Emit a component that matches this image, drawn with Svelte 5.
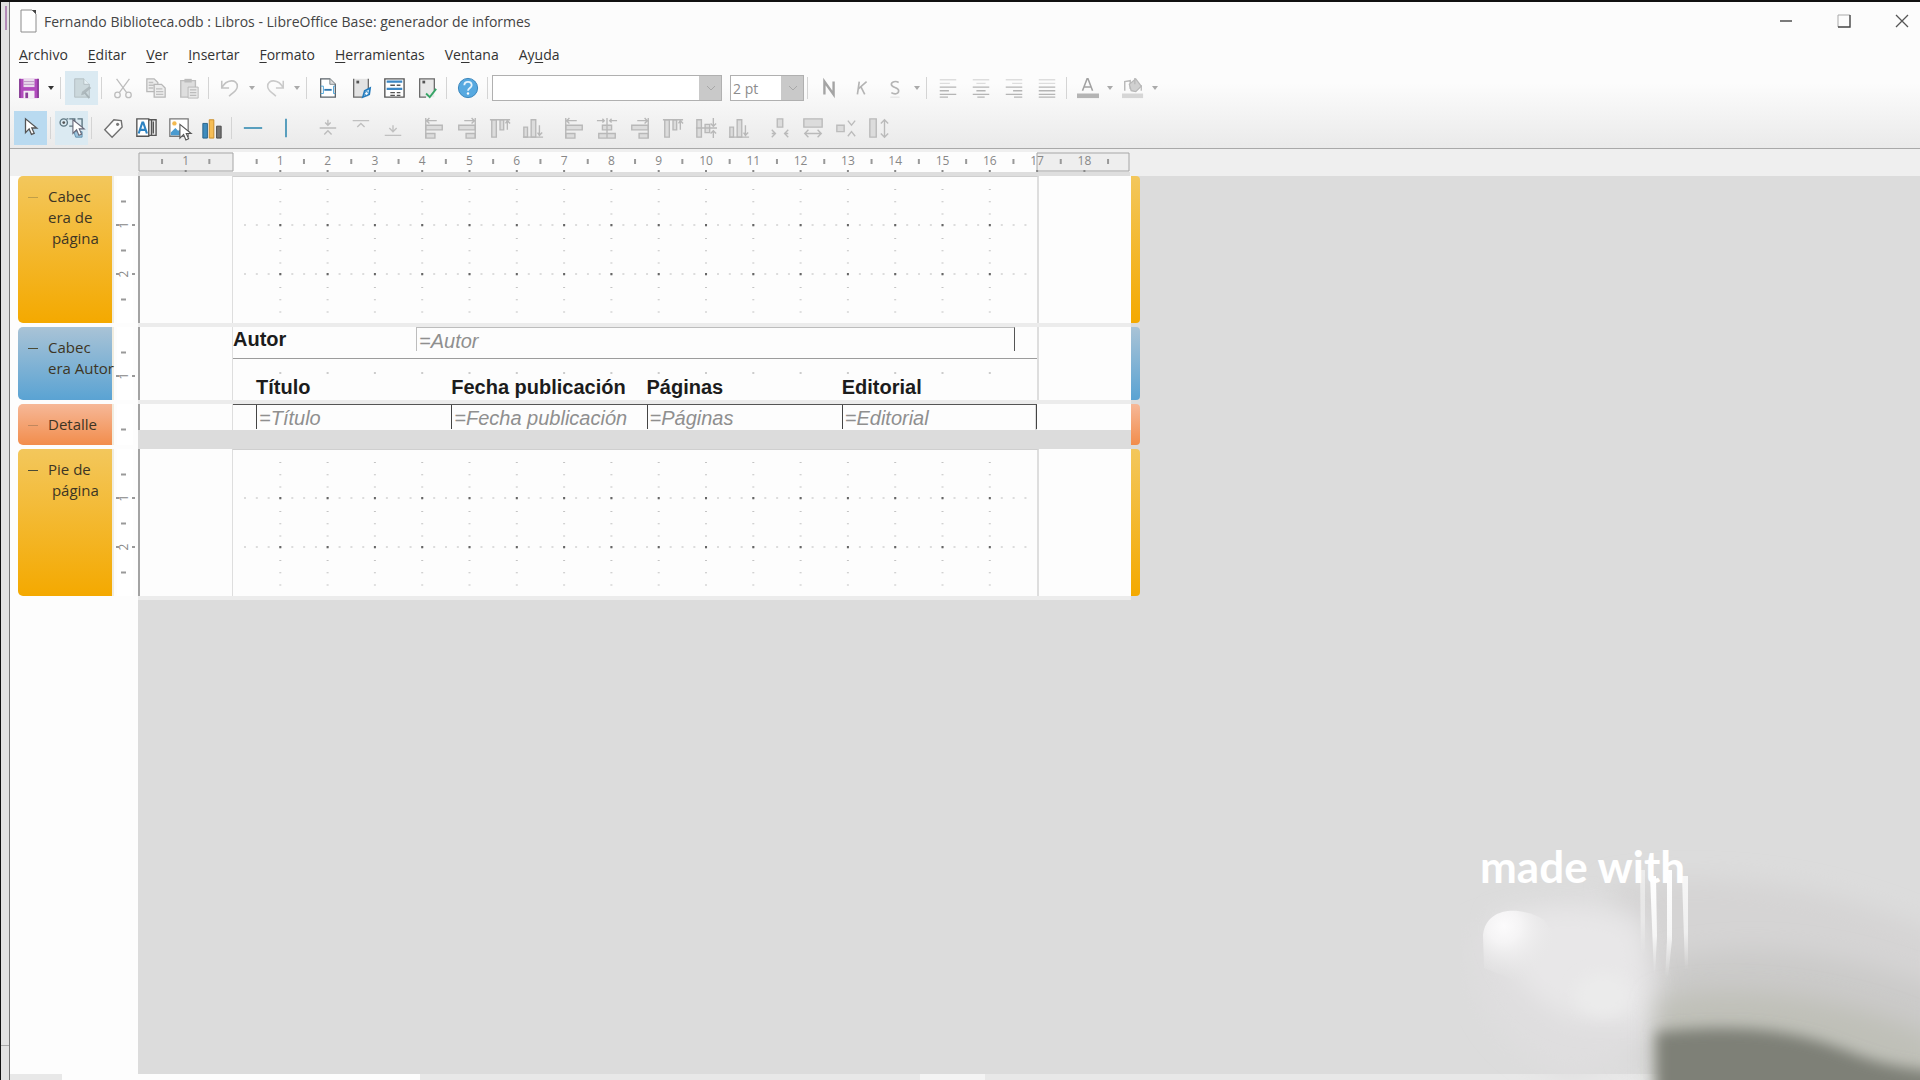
<script lang="ts">
  type Tool = { icon: string; label: string; state?: string; menu?: boolean };

  const CM = 47.3;
  const ROW_CM = 49;
  const PAGE_LEFT = 95;

  const menus = [
    ['', 'A', 'rchivo'],
    ['', 'E', 'ditar'],
    ['', 'V', 'er'],
    ['', 'I', 'nsertar'],
    ['', 'F', 'ormato'],
    ['', 'H', 'erramientas'],
    ['Ve', 'n', 'tana'],
    ['Ay', 'u', 'da']
  ];

  const standard: Tool[][] = [
    [{ icon: 'save', label: 'Guardar', menu: true }],
    [{ icon: 'edit', label: 'Modo de edición', state: 'soft' }],
    [
      { icon: 'cut', label: 'Cortar' },
      { icon: 'copy', label: 'Copiar' },
      { icon: 'paste', label: 'Pegar' }
    ],
    [
      { icon: 'undo', label: 'Deshacer', menu: true },
      { icon: 'redo', label: 'Rehacer', menu: true }
    ],
    [
      { icon: 'page', label: 'Configurar página' },
      { icon: 'navigator', label: 'Navegador' },
      { icon: 'sorting', label: 'Ordenar y agrupar' },
      { icon: 'execute', label: 'Ejecutar informe' }
    ],
    [{ icon: 'help', label: 'Ayuda' }]
  ];

  const formatting: Tool[][] = [
    [
      { icon: 'bold', label: 'Negrita' },
      { icon: 'italic', label: 'Cursiva' },
      { icon: 'underline', label: 'Subrayado', menu: true }
    ],
    [
      { icon: 'textLeft', label: 'Alinear a la izquierda' },
      { icon: 'textCenter', label: 'Centrar' },
      { icon: 'textRight', label: 'Alinear a la derecha' },
      { icon: 'textJustify', label: 'Justificar' }
    ],
    [
      { icon: 'fontColor', label: 'Color de letra', menu: true },
      { icon: 'fill', label: 'Color de fondo', menu: true }
    ]
  ];

  const drawing: Tool[][] = [
    [{ icon: 'pointer', label: 'Seleccionar', state: 'active' }],
    [{ icon: 'controls', label: 'Controles', state: 'soft' }],
    [
      { icon: 'tag', label: 'Etiqueta' },
      { icon: 'textbox', label: 'Cuadro de texto' },
      { icon: 'image', label: 'Imagen' },
      { icon: 'chart', label: 'Gráfico' }
    ],
    [
      { icon: 'hline', label: 'Línea horizontal' },
      { icon: 'vline', label: 'Línea vertical' }
    ]
  ];

  const aligning: Tool[][] = [
    [
      { icon: 'shrink', label: 'Reducir' },
      { icon: 'shrinkTop', label: 'Reducir desde arriba' },
      { icon: 'shrinkBottom', label: 'Reducir desde abajo' }
    ],
    [
      { icon: 'left', label: 'Izquierda en la sección' },
      { icon: 'right', label: 'Derecha en la sección' },
      { icon: 'top', label: 'Arriba en la sección' },
      { icon: 'bottom', label: 'Abajo en la sección' }
    ],
    [
      { icon: 'left', label: 'Izquierda' },
      { icon: 'center', label: 'Centrado' },
      { icon: 'right', label: 'Derecha' },
      { icon: 'top', label: 'Arriba' },
      { icon: 'middle', label: 'En el medio' },
      { icon: 'bottom', label: 'Abajo' }
    ],
    [
      { icon: 'minWidth', label: 'Ajustar a la anchura mínima' },
      { icon: 'maxWidth', label: 'Ajustar a la anchura máxima' },
      { icon: 'minHeight', label: 'Ajustar a la altura mínima' },
      { icon: 'maxHeight', label: 'Ajustar a la altura máxima' }
    ]
  ];

  const cursor = 'v15l4-4 2.5 6 3-1.2-2.6-5.8h5.4z';

  const icons: Record<string, string> = {
    save: '<path d="M2 2h20v21H2z" fill="#b14bbd"/><path d="M2 2v21M22 2v21" stroke="#7d2d8c" stroke-width="1.5"/><path d="M6 2h12v9H6z" fill="#e9dcec"/><path d="M6 5h12M6 8h12" stroke="#b98fc0"/><path d="M6 15h12v8H6z" fill="#f4ecf5"/><path d="M8 17h3v6H8z" fill="#8b3d98"/>',
    edit: '<path d="M4 2h10l6 6v14H4z" fill="#cbd8dc" stroke="#b2bdc2"/><path d="M14 2v6h6" fill="#e6f1f5" stroke="#b2bdc2"/><path d="M11 20l1-4 8-6 2 2-8 7z" fill="#aeb9bd"/><path d="M15 17l5 6" stroke="#a8b4b8" stroke-width="2"/>',
    cut: '<g fill="none" stroke="#bdbdbd" stroke-width="1.4"><path d="M5 2l11 15M19 2L8 17"/><circle cx="6" cy="19.5" r="3"/><circle cx="18" cy="19.5" r="3"/></g>',
    copy: '<g fill="#ededed" stroke="#b8b8b8" stroke-width="1.4"><path d="M2 2h8l4 4v10H2z"/><path d="M10 8h8l4 4v10H10z"/></g><path d="M4 6h5M4 9h6M4 12h5M12 13h7M12 16h8M12 19h8" stroke="#c0c0c0" stroke-width="1.4"/>',
    paste: '<path d="M3 4h16v18H3z" fill="#dedede" stroke="#bdbdbd" stroke-width="1.5"/><path d="M7 2h8v4H7z" fill="#bcbcbc"/><path d="M11 11h11v12H11z" fill="#e8e8e8" stroke="#b8b8b8"/><path d="M13 14h7M13 17h7M13 20h7" stroke="#bbb" stroke-width="1.5"/>',
    undo: '<path d="M3 4v8h8M3 12C8 2 20 2 20 10c0 5-4 6-9 11" fill="none" stroke="#c2c2c2" stroke-width="1.7"/>',
    redo: '<path d="M21 4v8h-8M21 12C16 2 4 2 4 10c0 5 4 6 9 11" fill="none" stroke="#cacaca" stroke-width="1.7"/>',
    page: '<path d="M4 2h10l6 6v14H4z" fill="#fff" stroke="#5a6268" stroke-width="1.4"/><path d="M14 2v6h6" fill="#ddd" stroke="#7d858a"/><path d="M4 10h3v8H4M20 10h-2v8h2" fill="none" stroke="#4ba3d8"/><path d="M8 14h8" stroke="#2d77b0" stroke-width="2"/>',
    navigator: '<path d="M4 2h16v20H4z" fill="#e3e3e3"/><path d="M4 2v20h10M20 2v11" fill="none" stroke="#6a6a6a" stroke-width="1.4"/><path d="M7 4h3v3H7z" fill="#555"/><path d="M14 22l2-7 6-3-1 7z" fill="#bfe0f6" stroke="#237bbd" stroke-width="1.8"/><circle cx="18" cy="18" r="2" fill="#fff" stroke="#237bbd"/>',
    sorting: '<path d="M2 2h21v20H2z" fill="#fff" stroke="#555" stroke-width="1.5"/><path d="M4 5h17M4 13h17" stroke="#3a86c4" stroke-width="2.5"/><path d="M8 9h5M15 9h4M8 17h5M15 17h4M8 20h5M15 20h4" stroke="#555" stroke-width="1.5"/>',
    execute: '<path d="M4 2h16v20H4z" fill="#e8e8e8"/><path d="M11 22H4V2h16v13" fill="none" stroke="#6a6a6a" stroke-width="1.4"/><path d="M7 4h3v3H7z" fill="#555"/><path d="M11 18l4 4 7-9" fill="none" stroke="#36a566" stroke-width="2"/>',
    help: '<circle cx="12" cy="12" r="10.5" fill="#57a9e0" stroke="#3280b8"/><path d="M8 9c0-5 8-5 8 0 0 3-4 3-4 6" fill="none" stroke="#e6f4fd" stroke-width="2"/><circle cx="12" cy="18" r="1.3" fill="#fff"/>',
    bold: '<path d="M7 19V5l10 14V5" fill="none" stroke="#a4a4a4" stroke-width="2.6"/>',
    italic: '<path d="M9 5L7 19M17 5l-9 8M11 11l4 8" fill="none" stroke="#b4b4b4" stroke-width="1.8"/>',
    underline: '<path d="M16 6c-3-2-8-1-8 2 0 4 8 3 8 7 0 4-5 4-8 2" fill="none" stroke="#b4b4b4" stroke-width="1.8"/><path d="M7 22h10" stroke="#ddd"/>',
    textLeft: '<path d="M3 3h18M3 7h11" stroke="#ddd" stroke-width="1.5"/><path d="M3 11h18M3 15h10M3 19h18M3 22h9" stroke="#b5b5b5" stroke-width="1.5"/>',
    textCenter: '<path d="M3 3h18M7 7h10" stroke="#ddd" stroke-width="1.5"/><path d="M3 11h18M7 15h10M3 19h18M8 22h8" stroke="#b5b5b5" stroke-width="1.5"/>',
    textRight: '<path d="M3 3h18M10 7h11" stroke="#ddd" stroke-width="1.5"/><path d="M3 11h18M11 15h10M3 19h18M12 22h9" stroke="#b5b5b5" stroke-width="1.5"/>',
    textJustify: '<path d="M3 3h18M3 7h18" stroke="#ddd" stroke-width="1.5"/><path d="M3 11h18M3 15h18M3 19h18M3 22h18" stroke="#b5b5b5" stroke-width="1.5"/>',
    fontColor: '<path d="M6 15l5-13h1l5 13M8 11h7" fill="none" stroke="#a2a2a2" stroke-width="1.7"/><path d="M0 18h24v5H0z" fill="#b4b4b4"/>',
    fill: '<path d="M3 15V5l6-1v9" fill="none" stroke="#bababa" stroke-width="1.6"/><path d="M8 8l7-6 6 8-6 6-5-1z" fill="#d0d0d0" stroke="#b8b8b8" stroke-width="1.4"/><path d="M14 1v7M21 9v6" stroke="#b8b8b8" stroke-width="1.4"/><path d="M0 18h23v5H0z" fill="#d6d6d6"/>',
    pointer: `<path d="M6 2${cursor}" fill="#fff" stroke="#555" stroke-width="1.4"/>`,
    controls: `<g fill="none" stroke="#5d7580" stroke-width="1.5"><circle cx="3" cy="6" r="4"/><path d="M8 2H6M9 2h6v8H9M18 2h5v10"/></g><circle cx="3" cy="6" r="1.5" fill="#555"/><path d="M14 16h9v6h-7z" fill="#9fc6df" stroke="#5c8cab"/><path d="M13 3${cursor}" fill="#fff" stroke="#667" stroke-width="1.2"/>`,
    tag: '<path d="M3 14L13 3l8 1 1 7-11 11z" fill="#fbfbfb" stroke="#707070" stroke-width="1.5"/><circle cx="17" cy="8" r="1.7" fill="#777"/>',
    textbox: '<path d="M2 2h13v19H2z" fill="#fff" stroke="#555" stroke-width="1.5"/><path d="M4 18l4-12h1l4 12M6 14h6" fill="none" stroke="#2c83c3" stroke-width="2.3"/><path d="M15 3h3v17h-3M18 3h5v17h-5M20 5v13" fill="none" stroke="#555" stroke-width="1.5"/>',
    image: `<path d="M2 2h20v19H2z" fill="#fff" stroke="#777" stroke-width="1.4"/><circle cx="7" cy="7" r="2.4" fill="#f2b950"/><path d="M3 20v-3l5-5 3 3 2-1 4 6z" fill="#4a9bd0"/><path d="M13 8${cursor}" fill="#fff" stroke="#555" stroke-width="1.2"/>`,
    chart: '<path d="M2 7h5v16H2z" fill="#3f8cbd" stroke="#235f87"/><path d="M9 3h5v20H9z" fill="#f5bd55" stroke="#c78a24"/><path d="M17 10h5v13h-5z" fill="#747474" stroke="#454545"/>',
    hline: '<path d="M2 12h20" stroke="#4b97b9" stroke-width="2"/>',
    vline: '<path d="M12 2v20" stroke="#4b97b9" stroke-width="2"/>',
    shrink: '<path d="M4 12h18M13 3v5M10 6l3 3 3-3M9 19l4-4 4 4" fill="none" stroke="#bcbcbc" stroke-width="1.5"/>',
    shrinkTop: '<path d="M4 4h18M9 11l4-4 4 4" fill="none" stroke="#c0c0c0" stroke-width="1.5"/>',
    shrinkBottom: '<path d="M3 20h18M8 12l4 4 4-4M12 9v6" fill="none" stroke="#c0c0c0" stroke-width="1.5"/>',
    left: '<g fill="#dcdcdc" stroke="#b8b8b8" stroke-width="1.5"><path d="M3 9h18v5H3zM3 18h10v5H3z"/><path d="M3 1v22M3 4h12M7 1L4 4l3 3" fill="none"/></g>',
    right: '<g fill="#dcdcdc" stroke="#b8b8b8" stroke-width="1.5"><path d="M3 9h18v5H3zM11 18h10v5H11z"/><path d="M21 1v22M21 4H9M17 1l3 3-3 3" fill="none"/></g>',
    center: '<g fill="#dcdcdc" stroke="#b8b8b8" stroke-width="1.5"><path d="M7 9h10v5H7zM3 18h18v5H3z"/><path d="M12 1v22M1 4h8M23 4h-8M7 2l2 2-2 2M17 2l-2 2 2 2" fill="none"/></g>',
    top: '<g fill="#dcdcdc" stroke="#b8b8b8" stroke-width="1.5"><path d="M3 3h5v19H3zM12 3h4v11h-4z"/><path d="M1 3h22M20 14V4M18 7l2-3 3 3" fill="none"/></g>',
    middle: '<g fill="#dcdcdc" stroke="#b8b8b8" stroke-width="1.5"><path d="M2 3h5v19H2zM11 8h5v9h-5z"/><path d="M1 12h23M20 1v9M17 7l3 3 3-3M20 23v-8M17 18l3-3 3 3" fill="none"/></g>',
    bottom: '<g fill="#dcdcdc" stroke="#b8b8b8" stroke-width="1.5"><path d="M2 11h4v11H2zM10 3h5v19h-5z"/><path d="M1 22h22M19 9v11M17 17l2 3 3-3" fill="none"/></g>',
    minWidth: '<g fill="#dcdcdc" stroke="#bababa" stroke-width="1.5"><path d="M9 2h6v9H9z"/><path d="M3 14l4 4-4 4M21 14l-4 4 4 4M7 18H3M17 18h4" fill="none"/></g>',
    maxWidth: '<g fill="#dcdcdc" stroke="#bababa" stroke-width="1.5"><path d="M2 2h20v9H2z"/><path d="M7 14l-4 4 4 4M17 14l4 4-4 4M3 18h18" fill="none"/></g>',
    minHeight: '<g fill="#dcdcdc" stroke="#bcbcbc" stroke-width="1.5"><path d="M2 9h8v7H2z"/><path d="M14 4l4 5 4-5M14 21l4-5 4 5" fill="none"/></g>',
    maxHeight: '<g fill="#dcdcdc" stroke="#bababa" stroke-width="1.5"><path d="M2 2h7v20H2z"/><path d="M14 7l4-4 4 4M14 18l4 4 4-4M18 3v19" fill="none"/></g>'
  };

  const sections = [
    { id: 'page-header', lines: ['Cabec', 'era de', '\u00a0página'], color: 'gold', height: 147, dim: true },
    { id: 'group-header', lines: ['Cabec', 'era Autor'], color: 'blue', height: 73, dim: false },
    { id: 'detail', lines: ['Detalle'], color: 'coral', height: 41, dim: true },
    { id: 'page-footer', lines: ['Pie de', '\u00a0página'], color: 'gold', height: 147, dim: false }
  ];

  const columns = ['Título', 'Fecha publicación', 'Páginas', 'Editorial'];

  const range = (from: number, to: number) => Array.from({ length: Math.max(0, to - from + 1) }, (_, i) => from + i);

  let fontName = $state('');
  let fontSize = $state('2 pt');
</script>

{#snippet toolGroups(groups: Tool[][], ruled: boolean)}
  {#each groups as group}
    <div class="group" class:ruled>
      {#each group as tool}
        <button class="tool {tool.state ?? ''}" aria-label={tool.label}>
          <svg viewBox="0 0 24 24" width="22" height="22">{@html icons[tool.icon]}</svg>
        </button>
        {#if tool.menu}
          <button class="arrow" class:dark={tool.icon === 'save'} aria-label="{tool.label}: más opciones">
            <svg viewBox="0 0 8 6" width="8" height="6"><path d="M1 1h6L4 5z" fill="currentColor" /></svg>
          </button>
        {/if}
      {/each}
    </div>
  {/each}
{/snippet}

{#snippet dots(height: number)}
  <svg class="dots" width="804" height={height - 1} aria-hidden="true">
    {#each range(1, 16) as x}
      <line x1={x * CM} x2={x * CM} y1="12" y2={height} stroke="#c4c4c4" stroke-width="2" stroke-dasharray="1 11.25" />
    {/each}
    {#each range(1, 2) as y}
      <line x1="11" x2="796" y1={y * ROW_CM - 1} y2={y * ROW_CM - 1} stroke="#bbb" stroke-width="1" stroke-dasharray="2 9.825" />
      {#each range(1, 16) as x}
        <rect x={x * CM - 1} y={y * ROW_CM - 2} width="2" height="2" fill="#666" />
      {/each}
    {/each}
  </svg>
{/snippet}

<div class="desktop">
  <div class="behind" aria-hidden="true"></div>
  <div class="window">
    <header class="titlebar">
      <svg viewBox="0 0 18 24" width="18" height="24" aria-hidden="true">
        <path d="M2 1h11l4 4v18H2z" fill="#fff" stroke="#8c8c8c" />
        <path d="M13 1h4v4z" fill="#444" />
      </svg>
      <h1>Fernando Biblioteca.odb : Libros - LibreOffice Base: generador de informes</h1>
      <div class="controls">
        <button aria-label="Minimizar">
          <svg viewBox="0 0 14 14" width="14" height="14"><path d="M1 7h12" stroke="#444" stroke-width="1.4" /></svg>
        </button>
        <button aria-label="Maximizar">
          <svg viewBox="0 0 14 14" width="14" height="14"><path d="M1 13V1h12" fill="none" stroke="#aaa" /><path d="M13 1v12H1" fill="none" stroke="#444" stroke-width="1.4" /></svg>
        </button>
        <button aria-label="Cerrar">
          <svg viewBox="0 0 14 14" width="14" height="14"><path d="M1 1l12 12M13 1L1 13" stroke="#555" stroke-width="1.3" /></svg>
        </button>
      </div>
    </header>

    <div class="bars">
      <nav class="menu">
        {#each menus as [before, key, after]}
          <button>{before}<u>{key}</u>{after}</button>
        {/each}
      </nav>
      <div class="toolbar standard">
        {@render toolGroups(standard, true)}
        <label class="combo font-name">
          <select bind:value={fontName} aria-label="Nombre de letra"><option value=""></option></select>
          <svg viewBox="0 0 10 6" width="10" height="6"><path d="M1 1l4 4 4-4" fill="none" stroke="#a8a8a8" /></svg>
        </label>
        <label class="combo font-size">
          <select bind:value={fontSize} aria-label="Tamaño de letra"><option>2 pt</option></select>
          <svg viewBox="0 0 10 6" width="10" height="6"><path d="M1 1l4 4 4-4" fill="none" stroke="#a8a8a8" /></svg>
        </label>
        <div class="group ruled"></div>
        {@render toolGroups(formatting.slice(0, 2), true)}
        {@render toolGroups(formatting.slice(2), false)}
      </div>
      <div class="toolbar">
        {@render toolGroups(drawing.slice(0, 3), true)}
        {@render toolGroups(drawing.slice(3), false)}
        {@render toolGroups(aligning, false)}
      </div>
    </div>

    <div class="ruler">
      <svg width="993" height="27" aria-hidden="true">
        <rect x="0" y="4" width="992" height="18" fill="#eeeeee" />
        <rect x={PAGE_LEFT} y="3" width="804" height="20" fill="#fdfdfd" />
        <rect x="0" y="23" width="992" height="4" fill="#dedede" />
        <path d="M{PAGE_LEFT} 4V22H1V4ZM899 22V4h92v18z" fill="none" stroke="#a6a6a6" />
        {#each range(-1, 18) as n}
          {#if n !== 0}
            <text x={PAGE_LEFT + n * CM} y="16" text-anchor="middle">{Math.abs(n)}</text>
            <rect x={PAGE_LEFT + n * CM - 1} y="21" width="2" height="2" fill="#888" />
          {/if}
        {/each}
        {#each range(-2, 18) as n}
          <rect x={PAGE_LEFT + (n + 0.5) * CM - 1} y="10" width="2" height="5" fill="#999" />
        {/each}
      </svg>
    </div>

    <main>
      <div class="sections">
        {#each sections as section}
          <section>
            <header class={section.color}>
              <button class="fold" class:dim={section.dim} aria-label="Contraer sección"></button>
              <h2>{#each section.lines as line}<span>{line}</span>{/each}</h2>
            </header>
            <svg class="side-ruler" width="24" height={section.height} aria-hidden="true">
              <rect x="3" width="16" height={section.height} fill="#fff" />
              {#each range(0, Math.floor(section.height / ROW_CM - 0.5)) as n}
                <rect x="7" y={(n + 0.5) * ROW_CM} width="5" height="2" fill="#999" />
              {/each}
              {#each range(1, Math.floor(section.height / ROW_CM)) as n}
                {#if n < 3}
                  <text transform="translate(14 {n * ROW_CM}) rotate(-90)" text-anchor="middle">{n}</text>
                  <path d="M2 {n * ROW_CM}h3M18 {n * ROW_CM}h3" stroke="#999" stroke-width="2" />
                {/if}
              {/each}
            </svg>
            <div class="sheet {section.id}">
              <div class="printable">
                {#if section.id === 'group-header'}
                  <div class="author">
                    <strong>Autor</strong>
                    <em>=Autor</em>
                  </div>
                  <svg class="hint-dots" width="804" height="4" aria-hidden="true">
                    {#each range(1, 16) as x}
                      <rect x={x * CM - 1} y="1" width="2" height="2" fill="#ccc" />
                    {/each}
                  </svg>
                  <div class="columns">
                    {#each columns as column}<strong>{column}</strong>{/each}
                  </div>
                {:else if section.id === 'detail'}
                  <div class="columns">
                    {#each columns as column}<em>={column}</em>{/each}
                  </div>
                {:else}
                  {@render dots(section.height)}
                {/if}
              </div>
            </div>
            <div class="end {section.color}"></div>
          </section>
        {/each}
      </div>
      <div class="gutter"></div>
    </main>

    <footer>
      <span class="tab"></span>
      <span class="thumb"></span>
    </footer>

    <div class="mark">
      <svg viewBox="0 0 460 240" width="460" height="240" aria-hidden="true">
        <defs>
          <filter id="soft" x="-30%" y="-30%" width="160%" height="160%"><feGaussianBlur stdDeviation="12" /></filter>
          <filter id="edge" x="-30%" y="-30%" width="160%" height="160%"><feGaussianBlur stdDeviation="7" /></filter>
          <linearGradient id="streak" x1="0" y1="0" x2="0" y2="1">
            <stop offset="0" stop-color="#fff" />
            <stop offset="0.6" stop-color="#f6f6f6" />
            <stop offset="1" stop-color="#eee" stop-opacity="0" />
          </linearGradient>
          <radialGradient id="knob" gradientUnits="userSpaceOnUse" cx="44" cy="86" r="56">
            <stop offset="0" stop-color="#fcfbfc" />
            <stop offset="0.3" stop-color="#f5f4f5" />
            <stop offset="1" stop-color="#e6e6e6" stop-opacity="0" />
          </radialGradient>
        </defs>
        <path d="M150 45C300 25 400 60 480 95V220H170z" fill="#d5d4d4" filter="url(#soft)" />
        <path d="M205 120C290 100 380 110 480 150V220H205z" fill="#cbcac9" filter="url(#soft)" />
        <path d="M14 90C80 66 150 56 180 76L200 200 110 240Q0 190 14 90" fill="#dfdedf" filter="url(#soft)" />
        <path d="M36 78C90 66 150 62 180 90L190 180 120 180Q50 160 36 78" fill="#e8e7e8" filter="url(#soft)" />
        <ellipse cx="143" cy="155" rx="28" ry="22" fill="#ebebeb" filter="url(#edge)" />
        <path d="M196 160C270 142 390 155 480 200V250H196z" fill="#bfc0b8" filter="url(#soft)" />
        <path d="M196 192C290 182 340 192 390 212 420 224 450 230 490 232V280H196z" fill="#7e8077" filter="url(#edge)" />
        <path d="M23 95C26 66 62 66 84 80L105 110 70 146 24 128z" fill="url(#knob)" />
        <g fill="url(#streak)">
          <path d="M180 30h5v85h-4z" opacity="0.5" />
          <path d="M190 36h6l1 60-2 40h-1z" />
          <path d="M207 30h5v70l-4 38h-3l2-38z" />
          <path d="M222 36h6v94h-3z" opacity="0.8" />
        </g>
      </svg>
      <span>made with</span>
    </div>
  </div>
</div>

<style>
  :global(body) {
    font-family: 'Open Sans', 'Noto Sans', sans-serif;
    color: #333;
  }

  .desktop {
    display: flex;
    min-height: 100vh;
    box-sizing: border-box;
    overflow: hidden;
    border-top: 2px solid #111;
    border-left: 1px solid #111;
    background: #e4e4e4;
  }

  .behind {
    width: 9px;
    box-sizing: border-box;
    border-right: 1px solid #777;
    background:
      linear-gradient(#b48bb8, #b48bb8) 4px 4px / 2px 24px no-repeat,
      linear-gradient(#aaa, #aaa) 0 1043px / 8px 1px no-repeat,
      #e2e2e2;
  }

  .window {
    position: relative;
    display: flex;
    flex: 1;
    flex-direction: column;
    min-width: 0;
    background: #fcfcfc;
  }

  button {
    padding: 0;
    border: 0;
    background: none;
    font: inherit;
    color: inherit;
  }

  h1,
  h2 {
    margin: 0;
    font-weight: 400;
  }

  .titlebar {
    display: flex;
    align-items: center;
    height: 38px;
    padding: 0 6px 0 9px;
  }

  .titlebar h1 {
    flex: 1;
    margin-left: 7px;
    font-size: 14px;
    color: #444;
  }

  .controls {
    display: flex;
    gap: 34px;
  }

  .controls button {
    display: grid;
    place-items: center;
    width: 24px;
    height: 24px;
  }

  .bars {
    height: 108px;
    border-bottom: 1px solid #a9a9a9;
    background: linear-gradient(#fcfcfc 40%, #eaeaea);
  }

  .menu {
    display: flex;
    gap: 20px;
    height: 28px;
    padding-left: 9px;
    font-size: 14px;
    line-height: 30px;
  }

  u {
    text-underline-offset: 2px;
  }

  .toolbar {
    display: flex;
    align-items: center;
    height: 40px;
    padding-left: 4px;
  }

  .standard {
    padding-left: 2px;
  }

  .group {
    display: flex;
    align-items: center;
    height: 34px;
    padding-right: 8px;
  }

  .ruled {
    background: linear-gradient(#d4d4d4, #d4d4d4) right 4px center / 1px 22px no-repeat;
  }

  .tool {
    display: grid;
    place-items: center;
    width: 33px;
    height: 34px;
  }

  .tool svg {
    overflow: visible;
  }

  .soft {
    background: #dbeaf2;
  }

  .active {
    background: #b9daf0;
  }

  .arrow {
    display: grid;
    place-items: center;
    width: 12px;
    height: 34px;
    color: #aaa;
  }

  .dark {
    color: #333;
  }

  .combo {
    position: relative;
    height: 26px;
  }

  .combo svg {
    position: absolute;
    top: 10px;
    right: 6px;
    pointer-events: none;
  }

  select {
    width: 100%;
    height: 100%;
    padding: 0 2px;
    border: 1px solid #b0b0b0;
    border-radius: 0;
    appearance: none;
    background: linear-gradient(#c9c9c9, #c9c9c9) right / 22px 100% no-repeat, #fff;
    font: 14px 'Open Sans', sans-serif;
    color: #8c8c8c;
  }

  .font-name {
    width: 230px;
    margin-right: 8px;
  }

  .font-size {
    width: 74px;
  }

  .ruler {
    height: 27px;
    padding-left: 128px;
    background: #efefef;
  }

  .ruler svg {
    display: block;
  }

  svg text {
    font-size: 12px;
    fill: #888;
  }

  main {
    display: flex;
    flex: 1;
    flex-direction: column;
    background: #dcdcdc;
  }

  .gutter {
    flex: 1;
    width: 128px;
    background: #fdfdfd;
  }

  .sections {
    background: linear-gradient(90deg, #fdfdfd 128px, #dcdcdc 128px);
  }

  section {
    display: flex;
    padding-left: 8px;
    margin-bottom: 4px;
  }

  section > header {
    position: relative;
    z-index: 1;
    display: flex;
    box-sizing: border-box;
    width: 94px;
    padding: 10px 0 0 10px;
    border-radius: 5px 0 0 5px;
  }

  .fold {
    flex: none;
    width: 10px;
    height: 22px;
    background: linear-gradient(#4b4b36, #4b4b36) center / 10px 1px no-repeat;
  }

  .dim {
    opacity: 0.3;
  }

  h2 {
    margin-left: 10px;
    font-size: 15px;
    line-height: 21px;
    white-space: nowrap;
    color: #3d3524;
  }

  h2 span {
    display: block;
  }

  .gold {
    background: linear-gradient(#f3c75c, #f4a900);
  }

  .blue {
    background: linear-gradient(#a9c3d6, #5aa3d3);
  }

  .coral {
    background: linear-gradient(#f6b898, #f28d4c);
  }

  .side-ruler {
    flex: none;
    border-left: 2px solid #f1ede0;
  }

  .sheet {
    display: flex;
    box-sizing: border-box;
    width: 993px;
    padding: 0 94px 0 92px;
    border-left: 2px solid #a3a3a3;
    background: #fdfdfd;
    box-shadow: 0 4px #ececec;
  }

  .detail {
    align-self: flex-start;
    height: 26px;
    box-shadow: 0 19px #dcdcdc;
  }

  .printable {
    flex: 1;
    box-sizing: border-box;
    border: 0 solid #dedede;
    border-width: 0 2px 0 1px;
  }

  .page-header .printable,
  .page-footer .printable {
    border-top: 1px solid #cfcfcf;
  }

  .dots {
    display: block;
  }

  .end {
    width: 9px;
    border-radius: 0 4px 4px 0;
  }

  strong,
  em {
    font-family: 'Liberation Sans', Arial, sans-serif;
    font-size: 20px;
    line-height: 24px;
    white-space: nowrap;
  }

  strong {
    color: #1c1c1c;
  }

  em {
    color: #8f8f8f;
  }

  .author {
    display: grid;
    grid-template-columns: 183px 1fr;
    padding-right: 22px;
    height: 31px;
    border-bottom: 1px solid #9c9c9c;
  }

  .author em {
    height: 24px;
    padding-left: 2px;
    border: 1px solid #bdbdbd;
    border-right-color: #555;
    border-bottom: 0;
    box-sizing: border-box;
    line-height: 27px;
  }

  .hint-dots {
    display: block;
    margin-top: 12px;
  }

  .columns {
    display: grid;
    grid-template-columns: repeat(4, 1fr);
    padding-left: 23px;
  }

  .detail .columns {
    margin-right: -2px;
    border-top: 1px solid #555;
  }

  .detail em {
    padding-left: 2px;
    border-left: 1px solid #444;
    line-height: 26px;
    height: 24px;
  }

  .detail em:last-child {
    border-right: 1px solid #444;
  }

  footer {
    display: flex;
    height: 6px;
    padding-left: 52px;
    background: #e8e8e8;
  }

  .tab {
    width: 358px;
    background: #fdfdfd;
  }

  .thumb {
    width: 65px;
    margin-left: 500px;
    background: #f4f4f4;
  }

  .mark {
    position: absolute;
    right: 0;
    bottom: 0;
    height: 240px;
  }

  .mark span {
    position: absolute;
    top: 0;
    left: 20px;
    font: 700 44px/52px Lato, sans-serif;
    white-space: nowrap;
    color: #fff;
  }
</style>
